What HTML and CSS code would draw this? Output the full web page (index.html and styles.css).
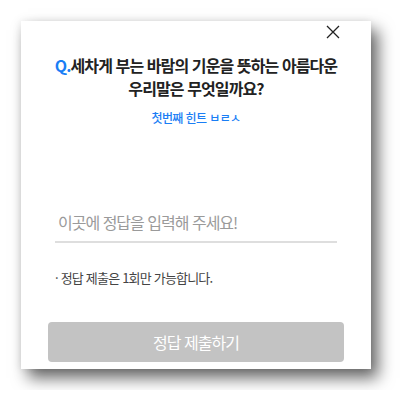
FILE: index.html
```html
<!DOCTYPE html>
<html lang="ko">

<head>
    <meta charset="UTF-8">
    <meta name="viewport" content="width=device-width, initial-scale=1.0">
    <title>정답 제출</title>
    <link rel="stylesheet" href="styles.css">
</head>

<body>
    <div class="quiz-card">
        <button class="close-btn" aria-label="닫기">
            <svg width="14" height="14" viewBox="0 0 14 14">
                <path d="M1 1 L13 13 M13 1 L1 13" stroke="#222" stroke-width="1.3" fill="none" />
            </svg>
        </button>

        <h2 class="question"><span class="q-mark">Q.</span>세차게 부는 바람의 기운을 뜻하는 아름다운<br>우리말은 무엇일까요?</h2>
        <p class="hint">첫번째 힌트 ㅂㄹㅅ</p>

        <div class="answer-box">
            <input type="text" class="answer-input" placeholder="이곳에 정답을 입력해 주세요!">
        </div>

        <p class="notice">· 정답 제출은 1회만 가능합니다.</p>

        <button class="submit-btn" disabled>정답 제출하기</button>
    </div>
</body>

</html>
```

FILE: styles.css
```css
body {
    margin: 0;
    padding: 21px;
    background: #fff;
    font-family: "Noto Sans CJK KR", "Noto Sans", sans-serif;
    color: #222;
}

.quiz-card {
    position: relative;
    width: 350px;
    height: 348px;
    box-sizing: border-box;
    background: #fff;
    padding: 0 27px;
    box-shadow: 7px 9px 15px rgba(0, 0, 0, 0.6), -1px 0 8px rgba(0, 0, 0, 0.08);
    display: flex;
    flex-direction: column;
}

.close-btn {
    position: absolute;
    top: 4px;
    right: 31px;
    padding: 0;
    border: none;
    background: none;
    cursor: pointer;
    line-height: 0;
}

.question {
    margin: 33px 0 0;
    font-size: 16px;
    font-weight: 700;
    line-height: 23px;
    letter-spacing: -0.9px;
    text-align: center;
    color: #222;
}

.q-mark {
    color: #1a7ef5;
}

.hint {
    margin: 9px 0 0;
    font-size: 12px;
    font-weight: 500;
    line-height: 18px;
    letter-spacing: -0.6px;
    text-align: center;
    color: #1a7ef5;
}

.answer-box {
    margin: 83px 7px 0;
    border-bottom: 2px solid #dedede;
}

.answer-input {
    width: 100%;
    box-sizing: border-box;
    border: none;
    outline: none;
    padding: 0 3px 7px;
    font-family: inherit;
    font-size: 16px;
    letter-spacing: -1px;
    color: #222;
    background: none;
}

.answer-input::placeholder {
    color: #9a9a9a;
}

.notice {
    margin: 25px 7px 0;
    font-size: 13px;
    letter-spacing: -0.8px;
    color: #444;
}

.submit-btn {
    margin-top: auto;
    margin-bottom: 7px;
    height: 40px;
    border: none;
    border-radius: 4px;
    background: #c3c3c3;
    color: #fff;
    font-family: inherit;
    font-size: 16px;
    letter-spacing: -1px;
}
```
